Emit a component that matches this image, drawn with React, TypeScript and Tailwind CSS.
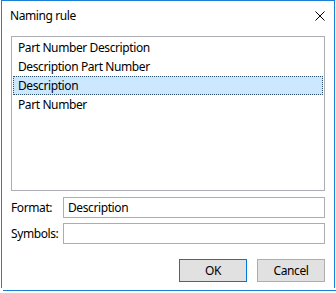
import { useState } from 'react'

const items = ['Part Number Description', 'Description Part Number', 'Description', 'Part Number']

export default function App() {
  const [selected, setSelected] = useState(2)

  return (
    <div
      className="w-[336px] h-[293px] bg-white text-black text-[12px] tracking-[-0.4px] overflow-hidden"
      style={{ fontFamily: '"Noto Sans", "Open Sans", sans-serif' }}
    >
      {/* Window frame */}
      <div className="ml-[1px] w-[334px] h-[288px] border-x border-t border-[#1c7fd6] flex flex-col">
        {/* Title bar */}
        <div className="h-[30px] flex items-center justify-between pl-[8px] pr-[9px]">
          <span>Naming rule</span>
          <svg width="10" height="10" viewBox="0 0 10 10" className="block">
            <path d="M0.5 0.5 L9.5 9.5 M9.5 0.5 L0.5 9.5" stroke="#000" strokeWidth="1" />
          </svg>
        </div>

        {/* Body */}
        <div className="px-[9px] pt-[5px] flex flex-col">
          {/* List */}
          <div className="h-[155px] border border-[#abadb3] p-[1px] bg-white">
            {items.map((item, i) => (
              <div
                key={item}
                onClick={() => setSelected(i)}
                className={
                  i === selected
                    ? 'h-[19px] flex items-center pl-[4px] bg-[#cce8ff] border border-dotted border-[#2d4f6e]'
                    : 'h-[19px] flex items-center pl-[5px]'
                }
              >
                {item}
              </div>
            ))}
          </div>

          {/* Fields */}
          <div className="mt-[6px] flex items-center">
            <span className="w-[52px]">Format:</span>
            <div className="flex-1 h-[21px] border border-[#abadb3] flex items-center pl-[4px]">
              Description
            </div>
          </div>
          <div className="mt-[5px] flex items-center">
            <span className="w-[52px]">Symbols:</span>
            <div className="flex-1 h-[21px] border border-[#abadb3]" />
          </div>

          {/* Buttons */}
          <div className="mt-[15px] flex justify-end gap-[10px]">
            <button className="w-[68px] h-[23px] bg-[#e1e1e1] border border-[#0078d7] flex items-center justify-center">
              OK
            </button>
            <button className="w-[68px] h-[23px] bg-[#e1e1e1] border border-[#adadad] flex items-center justify-center">
              Cancel
            </button>
          </div>
        </div>
      </div>
      <div className="mt-[2px] ml-[3px] w-[333px] h-[1px] bg-[#1c7fd6]" />
    </div>
  )
}
